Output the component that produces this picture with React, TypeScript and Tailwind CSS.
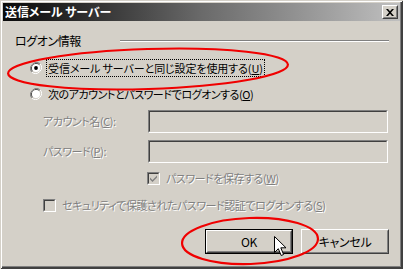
import React from "react";

const font = "font-['Noto_Sans_CJK_JP','Noto_Sans',sans-serif] [font-feature-settings:'palt']";
const dis = "text-[#808080] [text-shadow:1px_1px_0_#ffffff]";

function Radio({ checked }: { checked?: boolean }) {
  return (
    <svg width="12" height="12" viewBox="0 0 12 12" className="shrink-0">
      <path d="M10.2 1.8A6 6 0 0 0 1.8 10.2" fill="none" stroke="#808080" strokeWidth="1" />
      <path d="M9.5 2.5A5 5 0 0 0 2.5 9.5" fill="none" stroke="#404040" strokeWidth="1" />
      <path d="M1.8 10.2A6 6 0 0 0 10.2 1.8" fill="none" stroke="#ffffff" strokeWidth="1" />
      <path d="M2.5 9.5A5 5 0 0 0 9.5 2.5" fill="none" stroke="#d4d0c8" strokeWidth="1" />
      <circle cx="6" cy="6" r="4" fill="#ffffff" />
      {checked && <circle cx="6" cy="6" r="1.9" fill="#000000" />}
    </svg>
  );
}

function Check({ checked }: { checked?: boolean }) {
  return (
    <div className="w-[13px] h-[13px] shrink-0 border border-t-[#808080] border-l-[#808080] border-b-[#ffffff] border-r-[#ffffff]">
      <div className="w-full h-full border border-t-[#404040] border-l-[#404040] border-b-[#d4d0c8] border-r-[#d4d0c8] bg-[#d4d0c8] flex items-center justify-center">
        {checked && (
          <svg width="7" height="7" viewBox="0 0 7 7">
            <path d="M0 2.5 L2.5 5 L7 0.5 L7 2.5 L2.5 7 L0 4.5 Z" fill="#808080" />
          </svg>
        )}
      </div>
    </div>
  );
}

function Field() {
  return (
    <div className="w-[240px] h-[23px] border border-t-[#808080] border-l-[#808080] border-b-[#ffffff] border-r-[#ffffff]">
      <div className="w-full h-full border border-t-[#404040] border-l-[#404040] border-b-[#d4d0c8] border-r-[#d4d0c8] bg-[#d4d0c8]" />
    </div>
  );
}

function Raised({ children }: { children: React.ReactNode }) {
  return (
    <div className="w-full h-full border border-t-[#ffffff] border-l-[#ffffff] border-b-[#404040] border-r-[#404040]">
      <div className="w-full h-full border border-t-[#d4d0c8] border-l-[#d4d0c8] border-b-[#808080] border-r-[#808080] flex items-center justify-center text-[12px] tracking-[-0.3px] text-black">
        {children}
      </div>
    </div>
  );
}

export default function App() {
  return (
    <div
      className={`relative w-[403px] h-[269px] bg-[#d4d0c8] pt-[3px] px-[3px] overflow-hidden ${font} shadow-[inset_1px_1px_0_#d4d0c8,inset_-1px_-1px_0_#404040,inset_2px_2px_0_#ffffff,inset_-2px_-2px_0_#404040,inset_-3px_-3px_0_#808080]`}
    >
      {/* title bar */}
      <div className="h-[18px] flex items-center justify-between bg-gradient-to-r from-[#0a0a0a] via-[#6a6a6a] to-[#c0c0c0] pl-[2px] pr-[2px]">
        <span className="text-white font-bold text-[12px] leading-none tracking-[-0.1px]">送信メール サーバー</span>
        <div className="w-[16px] h-[14px] bg-[#d4d0c8] border border-t-[#ffffff] border-l-[#ffffff] border-b-[#404040] border-r-[#404040]">
          <div className="w-full h-full border border-b-[#808080] border-r-[#808080] border-t-transparent border-l-transparent flex items-center justify-center">
            <svg width="8" height="7" viewBox="0 0 8 7">
              <path d="M0 0 H2 L4 2.2 L6 0 H8 L5 3.5 L8 7 H6 L4 4.8 L2 7 H0 L3 3.5 Z" fill="#000" />
            </svg>
          </div>
        </div>
      </div>

      {/* content */}
      <div className="pl-[12px] pr-[11px] flex flex-col text-[11px] tracking-[-0.45px] text-black">
        {/* group header */}
        <div className="mt-[12px] h-[16px] flex items-center">
          <span className="w-[105px] leading-none text-[12px] tracking-[-0.4px]">ログオン情報</span>
          <div className="flex-1 flex flex-col">
            <div className="h-px bg-[#808080]" />
            <div className="h-px bg-white" />
          </div>
        </div>

        {/* radio 1 */}
        <div className="mt-[10px] h-[18px] flex items-center pl-[15px]">
          <Radio checked />
          <span className="ml-[4px] px-[1px] h-[18px] flex items-center border border-dotted border-black leading-none tracking-[-0.1px] whitespace-pre">
            受信メール サーバーと同じ設定を使用する(<u>U</u>)
          </span>
        </div>

        {/* radio 2 */}
        <div className="mt-[8px] h-[18px] flex items-center pl-[15px]">
          <Radio />
          <span className="ml-[6px] leading-none">
            次のアカウントとパスワードでログオンする(<u>O</u>)
          </span>
        </div>

        {/* account */}
        <div className="mt-[7px] h-[23px] flex items-center pl-[28px]">
          <span className={`w-[105px] leading-none ${dis}`}>
            アカウント名(<u>C</u>):
          </span>
          <Field />
        </div>

        {/* password */}
        <div className="mt-[7px] h-[23px] flex items-center pl-[28px]">
          <span className={`w-[105px] leading-none ${dis}`}>
            パスワード(<u>P</u>):
          </span>
          <Field />
        </div>

        {/* save password */}
        <div className="mt-[8px] h-[14px] flex items-center pl-[132px]">
          <Check checked />
          <span className={`ml-[6px] leading-none ${dis}`}>
            パスワードを保存する(<u>W</u>)
          </span>
        </div>

        {/* secure */}
        <div className="mt-[13px] h-[14px] flex items-center pl-[28px]">
          <Check />
          <span className={`ml-[6px] leading-none ${dis}`}>
            セキュリティで保護されたパスワード認証でログオンする(<u>S</u>)
          </span>
        </div>

        {/* buttons */}
        <div className="mt-[17px] flex justify-end gap-[8px]">
          <div className="w-[88px] h-[25px] border border-black">
            <Raised>OK</Raised>
          </div>
          <div className="w-[88px] h-[25px]">
            <Raised>キャンセル</Raised>
          </div>
        </div>
      </div>

      {/* annotations overlay */}
      <svg className="absolute left-0 top-0 pointer-events-none" width="403" height="269" viewBox="0 0 403 269">
        <ellipse cx="148" cy="69" rx="140" ry="20" fill="none" stroke="#f00000" strokeWidth="2.2" transform="rotate(-1.8 148 69)" />
        <ellipse cx="250" cy="241" rx="68" ry="23" fill="none" stroke="#f00000" strokeWidth="2.2" transform="rotate(-2 250 241)" />
        <path
          d="M274.5 236.5 L274.5 252.5 L278.3 248.7 L281.2 255.5 L283.6 254.5 L280.8 247.8 L286 247.8 Z"
          fill="#ffffff"
          stroke="#000000"
          strokeWidth="1"
          strokeLinejoin="miter"
        />
      </svg>
    </div>
  );
}
